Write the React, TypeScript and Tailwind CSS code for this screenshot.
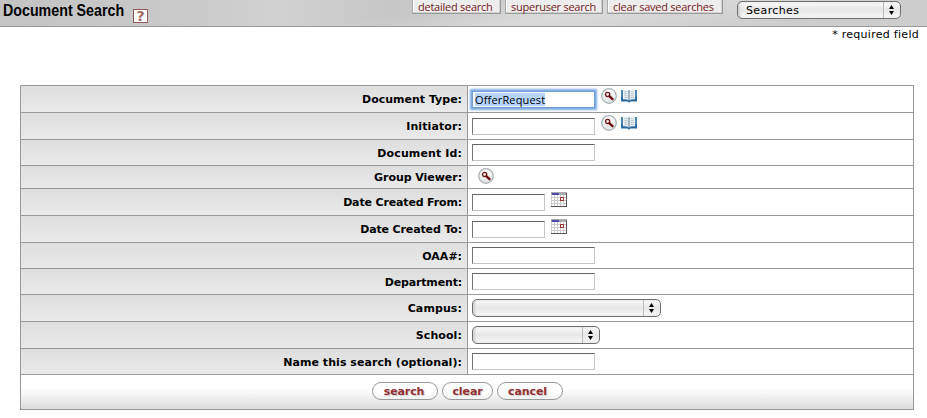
import React from "react";

function Lookup({ className = "" }: { className?: string }) {
  return (
    <svg width="16" height="16" viewBox="0 0 16 16" className={"block shrink-0 " + className}>
      <defs>
        <linearGradient id="lens" x1="0" y1="0" x2="0" y2="1">
          <stop offset="0" stopColor="#ffffff" />
          <stop offset="1" stopColor="#dfe1e3" />
        </linearGradient>
      </defs>
      <circle cx="8" cy="8" r="7.3" fill="url(#lens)" stroke="#a9b1b7" strokeWidth="1.3" />
      <circle cx="6.6" cy="6.5" r="2.1" fill="#f4e8e8" stroke="#6e1414" strokeWidth="1.3" />
      <path d="M8.5 8.4L11.5 11.2" stroke="#6e0f10" strokeWidth="2.4" strokeLinecap="round" />
    </svg>
  );
}

function Book() {
  return (
    <svg width="16" height="14" viewBox="0 0 16 14" className="block shrink-0">
      <path d="M0 1H16V12.6H9.5L8 13.8L6.5 12.6H0Z" fill="#2c6a9e" />
      <path d="M0 1H2V8H0Z M14 1H16V8H14Z" fill="#4c84b2" />
      <path d="M2 .6Q6 -.2 8 1.8Q10 -.2 14 .6V10.3Q10 9.7 8 11.5Q6 9.7 2 10.3Z" fill="#eef3f6" />
      <path d="M8 1.8V11.5" stroke="#5a7d98" strokeWidth="1" />
      <path d="M3.3 2.7H6.5M3.3 4.7H6.5M3.3 6.7H6.5M3.3 8.6H6.5M9.5 2.7H12.7M9.5 4.7H12.7M9.5 6.7H12.7M9.5 8.6H12.7" stroke="#a9b5bd" strokeWidth=".8" />
    </svg>
  );
}

function Calendar() {
  return (
    <svg width="16" height="15" viewBox="0 0 16 15" shapeRendering="crispEdges" className="ml-[6px] mt-[3px] block shrink-0">
      <path fill="#fff" d="M0 0H16V15H0Z" />
      <path d="M.5 3V14M3.5 3V14M6.5 3V14M9.5 3V14M12.5 3V14M0 5.5H15M0 8.5H15M0 11.5H15" stroke="#ccc" />
      <path d="M0 0H16V3H0Z" fill="#aaa" />
      <path d="M1 1H8V3H1Z" fill="#4b4bad" />
      <path d="M0 14.5H15.5V1" fill="none" stroke="#555" />
      <rect x="9.5" y="5.5" width="3" height="3" fill="#fff" stroke="#a33535" />
    </svg>
  );
}

function Field({ small = false, top = "mt-[5px]" }: { small?: boolean; top?: string }) {
  return (
    <input
      className={
        "block h-[17px] shrink-0 border border-b-[#c6c6c6] border-l-[#777] border-r-[#c6c6c6] border-t-[#666] bg-white outline-none " +
        top + (small ? " w-[73px]" : " w-[123px]")
      }
    />
  );
}

function Select({ width, label = "" }: { width: string; label?: string }) {
  return (
    <div
      className={
        "flex h-[18px] shrink-0 items-stretch rounded-[5px] border border-[#707070] bg-linear-to-b from-[#fafafa] via-[#e7e7e7] to-[#f8f8f8] shadow-[inset_2px_0_2px_#d2d2d2] " +
        width
      }
    >
      <span className="flex-1 pl-[8px] text-[11px] leading-[17px] tracking-[0.38px]">{label}</span>
      <span className="flex w-[17px] items-center justify-center border-l border-[#bbb] pr-[2px]">
        <svg width="5" height="10" viewBox="0 0 5 10">
          <path d="M2.5 0L5 4H0ZM0 6H5L2.5 10Z" fill="#000" />
        </svg>
      </span>
    </div>
  );
}

function Row({ label, height, tracking = "tracking-[0.1px]", children }: { label: string; height: string; tracking?: string; children: React.ReactNode }) {
  return (
    <div className={"flex border-b border-[#999] " + height}>
      <div className={"flex w-[447px] shrink-0 items-center justify-end border-r border-[#999] bg-linear-to-b from-[#dedede] to-[#eaeaea] pr-[5px] pt-[1px] text-[11px] font-bold leading-[13px] " + tracking}>
        {label}
      </div>
      <div className="flex flex-1 items-start pl-[4px]">{children}</div>
    </div>
  );
}

function TopButton({ text, className }: { text: string; className: string }) {
  return (
    <button className={"h-[14px] shrink-0 whitespace-nowrap border border-t-0 border-b-[#999] border-l-[#aaa] border-r-[#999] bg-[#ededed] pl-[5px] text-left font-['Open_Sans','Noto_Sans',sans-serif] text-[11px] leading-[12px] tracking-[-0.25px] text-[#741a20] shadow-[inset_-1px_-1px_#d0d0d0,inset_1px_0_#fff] " + className}>
      {text}
    </button>
  );
}

function ActionButton({ text, className }: { text: string; className: string }) {
  return (
    <button className={"h-[18px] rounded-[9px] border border-[#999] bg-linear-to-b from-white from-60% to-[#f1f1f1] text-[11px] font-bold leading-[15px] tracking-[-0.1px] text-[#943036] [text-shadow:1px_1px_1px_#ccc] " + className}>
      {text}
    </button>
  );
}

export default function App() {
  return (
    <div className="h-[418px] w-[927px] overflow-hidden bg-white font-['DejaVu_Sans',Verdana,sans-serif] text-[11px] text-black">
      <header className="flex h-[27px] items-start border-b border-[#999] bg-[linear-gradient(172deg,transparent_45%,#ffffff38_60%,transparent_85%),linear-gradient(90deg,#c4c4c4,#c9c9c9_20%,#d2d2d2_30%,#c6c6c6_42%,#d0d0d0_60%,#cdcdcd)]">
        <h1 className="w-[133px] shrink-0 whitespace-nowrap pl-[3px] font-['Liberation_Sans',Arial,sans-serif] text-[16px] font-bold leading-[21px]">
          <span className="inline-block origin-left scale-x-[0.89]">Document Search</span>
        </h1>
        <div className="mt-[9px] flex h-[14px] w-[15px] shrink-0 items-center justify-center border border-[#985858] bg-white text-[14px] font-bold leading-[12px] text-[#a06560]">?</div>
        <div className="ml-[264px] flex gap-[4px]">
          <TopButton text="detailed search" className="w-[89px]" />
          <TopButton text="superuser search" className="w-[98px]" />
          <TopButton text="clear saved searches" className="w-[116px]" />
        </div>
        <div className="ml-[14px] mt-[1px]">
          <Select width="w-[164px]" label="Searches" />
        </div>
      </header>
      <p className="h-[58px] pr-[8px] pt-[1px] text-right leading-[13px] tracking-[0.28px]">* required field</p>
      <main className="ml-[20px] w-[894px] border-x border-t border-[#999]">
        <Row label="Document Type:" height="h-[27px]" tracking="tracking-[0px]">
          <input
            defaultValue="OfferRequest"
            className="mt-[5px] block h-[17px] w-[123px] shrink-0 border border-[#719fd5] bg-[linear-gradient(#b5d5ff,#b5d5ff)] bg-[length:70px_13px] bg-[position:2px_1px] bg-no-repeat pl-[2px] font-['Open_Sans','Noto_Sans',sans-serif] text-[11px] leading-[15px] tracking-[0.15px] shadow-[0_0_2px_2px_#7ba9df] outline-none"
          />
          <Lookup className="ml-[6px] mt-[2px]" />
          <div className="ml-[4px] mt-[3px]"><Book /></div>
        </Row>
        <Row label="Initiator:" height="h-[27px]">
          <Field />
          <Lookup className="ml-[6px] mt-[2px]" />
          <div className="ml-[4px] mt-[3px]"><Book /></div>
        </Row>
        <Row label="Document Id:" height="h-[26px]" tracking="tracking-[0.12px]"><Field top="mt-[4px]" /></Row>
        <Row label="Group Viewer:" height="h-[23px]" tracking="tracking-[-0.05px]"><Lookup className="ml-[6px] mt-[2px]" /></Row>
        <Row label="Date Created From:" height="h-[27px]" tracking="tracking-[-0.15px]"><Field small /><Calendar /></Row>
        <Row label="Date Created To:" height="h-[27px]" tracking="tracking-[-0.13px]"><Field small /><Calendar /></Row>
        <Row label="OAA#:" height="h-[26px]" tracking="tracking-[0px]"><Field top="mt-[4px]" /></Row>
        <Row label="Department:" height="h-[26px]" tracking="tracking-[-0.15px]"><Field top="mt-[4px]" /></Row>
        <Row label="Campus:" height="h-[27px]"><div className="mt-[4px]"><Select width="w-[189px]" /></div></Row>
        <Row label="School:" height="h-[27px]"><div className="mt-[4px]"><Select width="w-[128px]" /></div></Row>
        <Row label="Name this search (optional):" height="h-[26px]" tracking="tracking-[0.06px]"><Field top="mt-[4px]" /></Row>
        <div className="flex h-[35px] items-start gap-[4px] border-b border-[#999] bg-linear-to-b from-white from-40% to-[#dcdcdc] pl-[351px] pt-[7px]">
          <ActionButton text="search" className="w-[66px] pr-[2px]" />
          <ActionButton text="clear" className="w-[51px]" />
          <ActionButton text="cancel" className="w-[66px] pr-[5px]" />
        </div>
      </main>
    </div>
  );
}
